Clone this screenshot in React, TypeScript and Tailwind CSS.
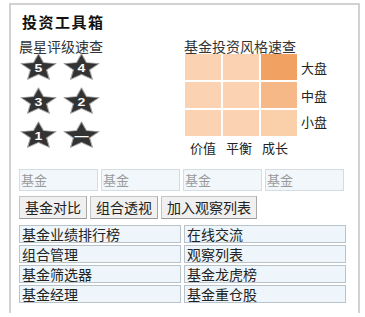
const STARS = ['5', '4', '3', '2', '1', '—'];

const CELLS = [
  'bg-[#fbd3b2]', 'bg-[#fbd3b2]', 'bg-[#f1a262]',
  'bg-[#fbd3b2]', 'bg-[#fbd3b2]', 'bg-[#f6b887]',
  'bg-[#fbd3b2]', 'bg-[#fbd3b2]', 'bg-[#fad0ab]',
];

const LINKS = [
  ['基金业绩排行榜', '在线交流'],
  ['组合管理', '观察列表'],
  ['基金筛选器', '基金龙虎榜'],
  ['基金经理', '基金重仓股'],
];

function Star({ label }: { label: string }) {
  return (
    <svg width="37" height="27" viewBox="0 0 100 96" preserveAspectRatio="none">
      <polygon
        points="50,3 63.5,34.4 97.5,37.5 71.9,60.1 79.4,93.4 50,76 20.6,93.4 28.1,60.1 2.5,37.5 36.5,34.4"
        fill="#333"
        stroke="#a0a0a0"
        strokeWidth="3"
        strokeLinejoin="round"
      />
      <text
        x="50"
        y="67"
        textAnchor="middle"
        fill="#fff"
        fontSize="38"
        fontWeight="bold"
        fontFamily="'Liberation Sans', sans-serif"
      >
        {label}
      </text>
    </svg>
  );
}

export default function App() {
  return (
    <div className="w-[365px] h-[317px] bg-white pt-[3px] pl-[9px] font-['Noto_Sans_CJK_SC',sans-serif] text-[#222]">
      <div className="w-[351px] h-[310px] border-t-2 border-l-2 border-r-2 border-[#d2d2d2] pl-[8px] pt-[7px]">
        {/* Title */}
        <p className="pl-[3px] text-[15px] font-bold leading-[20px] tracking-[1.5px] text-[#111]">投资工具箱</p>

        <div className="flex mt-[6px]">
          {/* Morningstar rating */}
          <div className="w-[165px]">
            <p className="text-[14px] leading-[16px] text-[#333]">晨星评级速查</p>
            <div className="grid grid-cols-[37px_37px] gap-x-[6px] gap-y-[7px] mt-[-1px] pl-[1px]">
              {STARS.map((s) => (
                <Star key={s} label={s} />
              ))}
            </div>
          </div>

          {/* Style box */}
          <div>
            <p className="text-[14px] leading-[16px] text-[#333]">基金投资风格速查</p>
            <div className="flex">
              <div className="grid grid-cols-[36px_36px_36px] grid-rows-[26px_26px_26px] gap-[2px] ml-[1px]">
                {CELLS.map((c, i) => (
                  <div key={i} className={c} />
                ))}
              </div>
              <div className="flex flex-col ml-[4px] text-[13px] text-[#222]">
                <span className="h-[28px] leading-[28px]">大盘</span>
                <span className="h-[27px] leading-[27px]">中盘</span>
                <span className="h-[26px] leading-[26px]">小盘</span>
              </div>
            </div>
            <div className="flex gap-[10px] pl-[6px] mt-[2px] text-[13px] text-[#222]">
              <span>价值</span>
              <span>平衡</span>
              <span>成长</span>
            </div>
          </div>
        </div>

        {/* Fund inputs */}
        <div className="flex gap-[3px] mt-[11px]">
          {[0, 1, 2, 3].map((i) => (
            <input
              key={i}
              placeholder="基金"
              className="w-[79px] h-[22px] bg-[#f1f7fb] border border-[#d6dde2] px-[1px] text-[13px] placeholder:text-[#9a9a9a] outline-none"
            />
          ))}
        </div>

        {/* Actions */}
        <div className="flex gap-[3px] mt-[5px]">
          {['基金对比', '组合透视', '加入观察列表'].map((b) => (
            <button
              key={b}
              className="h-[23px] px-[5px] bg-[#f0f0f0] border border-[#c4c4c4] border-b-[#9c9c9c] border-r-[#a8a8a8] text-[14px] leading-[20px] text-[#222]"
            >
              {b}
            </button>
          ))}
        </div>

        {/* Links */}
        <div className="grid grid-cols-[162px_162px] gap-x-[3px] gap-y-[2px] mt-[6px]">
          {LINKS.flat().map((l) => (
            <a
              key={l}
              className="h-[18px] bg-[#eef6fb] border border-[#b9c3ca] pl-[2px] text-[14px] leading-[16px] text-[#222]"
            >
              {l}
            </a>
          ))}
        </div>
      </div>
    </div>
  );
}
